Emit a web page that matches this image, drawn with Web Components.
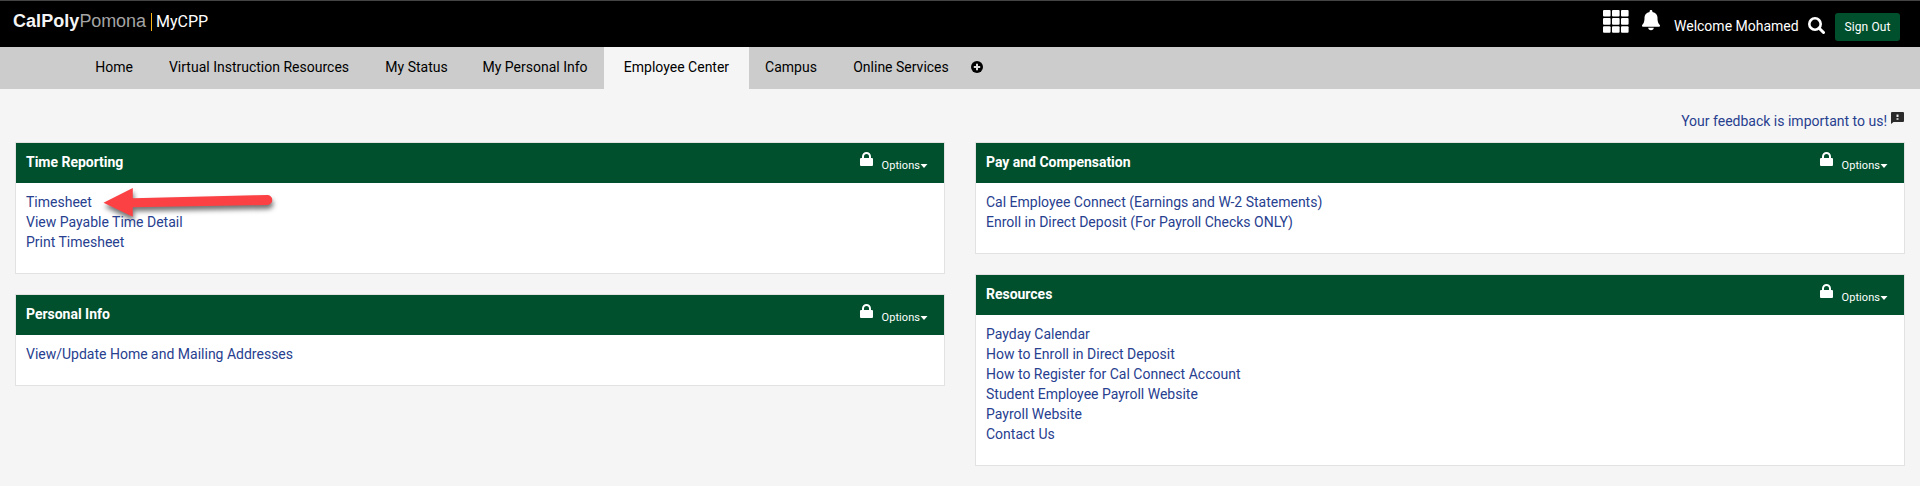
<!DOCTYPE html>
<html lang="en">
<head>
<meta charset="utf-8">
<title>MyCPP</title>
<style>
html,body{margin:0;height:100%;background:#f5f5f5}
body{font:14px/20px Roboto,sans-serif;color:#000;overflow:hidden}
</style>
</head>
<body>
<cpp-header></cpp-header>
<cpp-nav>
  <cpp-tab style="--w:74px">Home</cpp-tab>
  <cpp-tab style="--w:216px">Virtual Instruction Resources</cpp-tab>
  <cpp-tab style="--w:99px">My Status</cpp-tab>
  <cpp-tab style="--w:138px">My Personal Info</cpp-tab>
  <cpp-tab active style="--w:145px">Employee Center</cpp-tab>
  <cpp-tab style="--w:84px">Campus</cpp-tab>
  <cpp-tab style="--w:136px">Online Services</cpp-tab>
</cpp-nav>
<cpp-feedback>Your feedback is important to us!</cpp-feedback>
<cpp-columns>
  <cpp-column>
    <cpp-panel heading="Time Reporting">
      <cpp-link>Timesheet<cpp-arrow slot="marker"></cpp-arrow></cpp-link>
      <cpp-link>View Payable Time Detail</cpp-link>
      <cpp-link>Print Timesheet</cpp-link>
    </cpp-panel>
    <cpp-panel heading="Personal Info">
      <cpp-link>View/Update Home and Mailing Addresses</cpp-link>
    </cpp-panel>
  </cpp-column>
  <cpp-column>
    <cpp-panel heading="Pay and Compensation">
      <cpp-link>Cal Employee Connect (Earnings and W-2 Statements)</cpp-link>
      <cpp-link>Enroll in Direct Deposit (For Payroll Checks ONLY)</cpp-link>
    </cpp-panel>
    <cpp-panel heading="Resources">
      <cpp-link>Payday Calendar</cpp-link>
      <cpp-link>How to Enroll in Direct Deposit</cpp-link>
      <cpp-link>How to Register for Cal Connect Account</cpp-link>
      <cpp-link>Student Employee Payroll Website</cpp-link>
      <cpp-link>Payroll Website</cpp-link>
      <cpp-link>Contact Us</cpp-link>
    </cpp-panel>
  </cpp-column>
</cpp-columns>
<script>
const define = (name, html) => customElements.define(name, class extends HTMLElement {
  constructor() {
    super();
    const t = document.createElement('template');
    t.innerHTML = html;
    this.attachShadow({mode: 'open'}).append(t.content.cloneNode(true));
  }
  connectedCallback() {
    const h = this.shadowRoot.querySelector('[data-heading]');
    if (h) h.textContent = this.getAttribute('heading');
  }
});

define('cpp-header', `
<style>
:host{display:flex;box-sizing:border-box;height:47px;background:#000;border-top:1px solid #444;color:#fff;padding:0 20px 0 13px;align-items:flex-start}
.logo{font:bold 18px/20px "Liberation Sans",sans-serif;margin-top:10px;color:#f4f4f4;width:132px;white-space:nowrap;letter-spacing:.05px}
.logo span{font-weight:normal;color:#a4a4a4;letter-spacing:-.1px}
.bar{width:1px;height:18px;background:#fdb515;margin:12px 5px 0 6px;flex:none}
.app{font-size:16px;line-height:20px;margin:11px 0 0 -1px}
.grid{margin:9px 0 0 auto}
.bell{margin:9px 0 0 13px}
.hello{font-size:14px;margin:15px 0 0 14px;width:125px;white-space:nowrap}
.search{margin:16px 0 0 9px}
.out{margin:12px 0 0 10px;width:65px;height:28px;background:#00502d;border-radius:3px;font-size:12px;line-height:28px;text-align:center;letter-spacing:.1px}
svg{display:block;flex:none}
</style>
<div class="logo">CalPoly<span>Pomona</span></div><div class="bar"></div><div class="app">MyCPP</div>
<svg class="grid" width="26" height="23" fill="#fff"><g id="r"><rect x="0" y="0" width="7.6" height="6.6" rx="1"/><rect x="9" y="0" width="7.6" height="6.6" rx="1"/><rect x="18" y="0" width="7.6" height="6.6" rx="1"/></g><use href="#r" y="8.1"/><use href="#r" y="16.2"/></svg>
<svg class="bell" width="18" height="21" fill="#fff"><path d="M9 0c-.9 0-1.4.6-1.4 1.400v.5C4.300 2.500 2.500 4.800 2.500 7.600c0 4.800-1 5.900-2.200 7.400-.6.800-.3 1.700.7 1.700h16c1 0 1.300-.9.700-1.700C16.500 13.500 15.500 12.400 15.500 7.600c0-2.800-1.800-5.100-5.100-5.700v-.5C10.400.6 9.900 0 9 0zM6.200 17.700h5.600c0 1.600-1.200 2.500-2.800 2.500S6.200 19.300 6.200 17.700z"/></svg>
<div class="hello">Welcome Mohamed</div>
<svg class="search" width="17" height="17" fill="none" stroke="#fff"><circle cx="7" cy="7" r="5.700" stroke-width="2.600"/><path d="M11.200 11.200l4.300 4.300" stroke-width="3" stroke-linecap="round"/></svg>
<div class="out">Sign Out</div>`);

define('cpp-nav', `
<style>
:host{display:flex;height:42px;background:#ccc;padding-left:77px;align-items:center}
svg{display:block;margin:-2px 0 0 2px;flex:none}
</style>
<slot></slot>
<svg width="12" height="12"><circle cx="6" cy="6" r="6"/><path d="M6 2.800v6.400M2.800 6h6.400" stroke="#ddd" stroke-width="2"/></svg>`);

define('cpp-tab', `
<style>
:host{display:block;box-sizing:border-box;flex:none;height:42px;line-height:40px;width:var(--w);text-align:center;white-space:nowrap}
:host([active]){background:#f5f5f5}
</style><slot></slot>`);

define('cpp-feedback', `
<style>
:host{display:flex;justify-content:flex-end;height:31px;padding:22px 16px 0 0;color:#27408f}
svg{display:block;margin:1px 0 0 4px}
</style><slot></slot>
<svg width="13" height="12"><path d="M1 0h11a1 1 0 0 1 1 1v8a1 1 0 0 1-1 1H2.500L0 12V1a1 1 0 0 1 1-1z" fill="#2b2b2b"/><path d="M5.500 2.500h2v2.500h-2zM5.500 6.300h2v1.500h-2z" fill="#eee"/></svg>`);

define('cpp-columns', `
<style>:host{display:grid;grid-template-columns:930px 930px;column-gap:30px;padding:0 15px}</style><slot></slot>`);

define('cpp-column', `
<style>:host{display:flex;flex-direction:column;gap:20px}</style><slot></slot>`);

define('cpp-panel', `
<style>
:host{display:block;background:#fff;border:1px solid #e2e2e2}
header{display:flex;height:40px;background:#00502d;color:#fff;padding:0 16px 0 10px}
h2{margin:0;font-size:14px;line-height:39px;font-weight:bold;flex:1;letter-spacing:-.02px}
.lock{margin:9px 9px 0 0}
.opt{font-size:11px;line-height:14px;margin-top:16px;letter-spacing:.05px}
.caret{margin:21px 0 0 0}
svg{display:block}
.body{padding:9px 10px 21px}
</style>
<header><h2 data-heading></h2>
<svg class="lock" width="13" height="14"><path d="M3 7V4.500a3.500 3.500 0 0 1 7 0V7" fill="none" stroke="#fff" stroke-width="2"/><rect x="0" y="6" width="13" height="8" rx="1" fill="#fff"/></svg>
<span class="opt">Options</span><svg class="caret" width="8" height="4"><path d="M.5 0h7L4 4z" fill="#fff"/></svg></header>
<div class="body"><slot></slot></div>`);

define('cpp-link', `
<style>:host{display:block;position:relative;width:max-content;color:#27408f;white-space:nowrap}</style><slot></slot><slot name="marker"></slot>`);

// Red pointer that overlays the link it is slotted into.
define('cpp-arrow', `
<style>:host{position:absolute;left:73px;top:-8px}svg{display:block;overflow:visible}</style>
<svg width="180" height="44"><path d="M4.500 18.800L33.800 4v10.300L168.300 11a5 5 0 0 1 0 10L33.800 23.200v9.600z" fill="#fc4145" style="filter:drop-shadow(1px 4px 2.500px rgba(0,0,0,.55))"/></svg>`);
</script>
</body>
</html>
